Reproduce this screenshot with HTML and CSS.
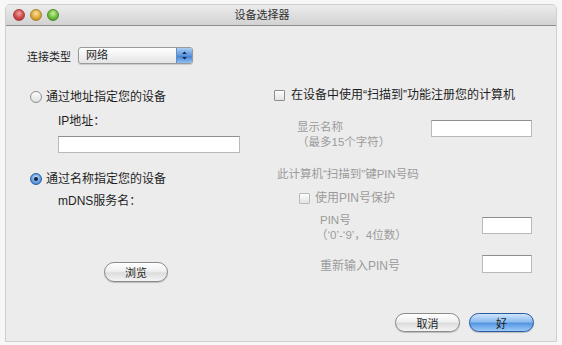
FILE: index.html
```html
<!DOCTYPE html>
<html lang="zh">
<head>
<meta charset="utf-8">
<link rel="stylesheet" href="styles.css">
</head>
<body>
<div class="window">
  <div class="titlebar">
    <div class="lights">
      <span class="light red"></span>
      <span class="light yellow"></span>
      <span class="light green"></span>
    </div>
    <div class="title">设备选择器</div>
  </div>
  <div class="content">
    <div class="conn-row">
      <span class="conn-label">连接类型</span>
      <div class="select">
        <span class="select-text">网络</span>
        <span class="stepper">
          <svg width="7" height="11" viewBox="0 0 7 11"><path d="M1 4 L3.5 1.5 L6 4 Z M1 7 L3.5 9.5 L6 7 Z" fill="#1a2a4a"/></svg>
        </span>
      </div>
    </div>
    <div class="columns">
      <div class="col-left">
        <div class="radio-row first">
          <span class="radio"></span>
          <span>通过地址指定您的设备</span>
        </div>
        <div class="sub-label ip-label">IP地址：</div>
        <div class="textbox ip-box"></div>
        <div class="radio-row second">
          <span class="radio checked"></span>
          <span>通过名称指定您的设备</span>
        </div>
        <div class="sub-label mdns-label">mDNS服务名：</div>
        <div class="btn browse">浏览</div>
      </div>
      <div class="col-right">
        <div class="check-row first">
          <span class="checkbox"></span>
          <span>在设备中使用“扫描到”功能注册您的计算机</span>
        </div>
        <div class="field-row display-row">
          <div class="dim two-line">显示名称<br><span class="indent">（最多15个字符）</span></div>
          <div class="textbox name-box"></div>
        </div>
        <div class="dim pin-heading">此计算机“扫描到”键PIN号码</div>
        <div class="check-row pin-check dim">
          <span class="checkbox disabled"></span>
          <span>使用PIN号保护</span>
        </div>
        <div class="field-row pin-row">
          <div class="dim two-line">PIN号<br><span class="indent2">（‘0’-‘9’，4位数）</span></div>
          <div class="textbox pin-box"></div>
        </div>
        <div class="field-row repin-row">
          <div class="dim">重新输入PIN号</div>
          <div class="textbox pin-box"></div>
        </div>
      </div>
    </div>
    <div class="footer">
      <div class="btn cancel">取消</div>
      <div class="btn ok">好</div>
    </div>
  </div>
</div>
</body>
</html>
```
FILE: styles.css
```css
* { box-sizing: border-box; }
html, body { margin: 0; padding: 0; }
body {
  background: #f7f7f7;
  font-family: "Liberation Sans", "Noto Sans CJK SC", sans-serif;
  font-size: 12px;
  color: #1e1e1e;
  width: 562px;
  height: 345px;
  overflow: hidden;
}
.window {
  margin: 4px 5px 0 5px;
  height: 338px;
  background: #ececec;
  border: 1px solid #cfcfcf;
  border-radius: 5px 5px 0 0;
  overflow: hidden;
}
.titlebar {
  height: 21px;
  display: flex;
  align-items: center;
  background: linear-gradient(#ececec, #d2d2d2);
  border-bottom: 1px solid #8f8f8f;
}
.lights {
  display: flex;
  gap: 5px;
  padding-left: 7px;
}
.light {
  width: 12px;
  height: 12px;
  border-radius: 50%;
  display: block;
}
.red { background: radial-gradient(circle at 50% 35%, #f3a3a3 0%, #d04848 55%, #9c2a2a 100%); border: 1px solid #a04040; }
.yellow { background: radial-gradient(circle at 50% 35%, #fbe1a0 0%, #e0a83a 55%, #a57a20 100%); border: 1px solid #a88030; }
.green { background: radial-gradient(circle at 50% 35%, #c8f0a0 0%, #6cbd3a 55%, #3f8a22 100%); border: 1px solid #4a8a30; }
.title {
  flex: 1;
  text-align: center;
  font-size: 11px;
  color: #333;
  margin-right: 91px;
  line-height: 21px;
}
.content {
  padding: 0 0 0 21px;
}
.conn-row {
  display: flex;
  align-items: center;
  margin-top: 21px;
  height: 17px;
}
.conn-label {
  font-size: 11px;
  width: 51px;
}
.select {
  width: 115px;
  height: 17px;
  display: flex;
  align-items: stretch;
  border: 1px solid #9a9a9a;
  border-radius: 3px;
  background: linear-gradient(#ffffff, #e4e4e4);
  box-shadow: 0 1px 1px rgba(0,0,0,0.15);
  overflow: hidden;
}
.select-text {
  flex: 1;
  font-size: 11px;
  line-height: 15px;
  padding-left: 7px;
}
.stepper {
  width: 16px;
  display: flex;
  align-items: center;
  justify-content: center;
  background: linear-gradient(#a8cdf5, #5b95dc 50%, #3f7fd0 51%, #8ec0f2);
  border-left: 1px solid #6a8cbc;
}
.columns {
  display: grid;
  grid-template-columns: 243px 259px;
  padding-left: 3px;
}
.col-left, .col-right {
  display: flex;
  flex-direction: column;
  align-items: flex-start;
}
.radio-row, .check-row {
  display: flex;
  align-items: center;
  height: 14px;
  line-height: 14px;
  gap: 4px;
}
.radio-row.first { margin-top: 26px; }
.radio-row.second { margin-top: 19px; }
.radio {
  width: 12px;
  height: 12px;
  border-radius: 50%;
  border: 1px solid #8d8d8d;
  background: linear-gradient(#fdfdfd, #e0e0e0);
  display: flex;
  align-items: center;
  justify-content: center;
}
.radio.checked {
  border-color: #2d5d9e;
  background: radial-gradient(circle at 50% 40%, #d6e8fb 0%, #6fa5e5 50%, #2f6ec4 100%);
}
.radio.checked::after {
  content: "";
  width: 4px;
  height: 4px;
  border-radius: 50%;
  background: #10223c;
}
.sub-label {
  padding-left: 28px;
  height: 14px;
  line-height: 14px;
}
.ip-label { margin-top: 10px; }
.mdns-label { margin-top: 8px; }
.textbox {
  background: #ffffff;
  border: 1px solid #b9b9b9;
  border-top-color: #8e8e8e;
  height: 17px;
}
.ip-box {
  margin-top: 8px;
  margin-left: 28px;
  width: 182px;
}
.btn {
  height: 20px;
  border-radius: 10px;
  border: 1px solid #8a8a8a;
  background: linear-gradient(#ffffff 0%, #f0f0f0 45%, #dcdcdc 55%, #f4f4f4 100%);
  font-size: 11px;
  display: flex;
  align-items: center;
  justify-content: center;
  box-shadow: 0 1px 1px rgba(0,0,0,0.2);
}
.browse {
  margin-top: 54px;
  margin-left: 74px;
  width: 64px;
}
.check-row.first { margin-top: 24px; }
.checkbox {
  width: 11px;
  height: 11px;
  border: 1px solid #8d8d8d;
  background: linear-gradient(#fdfdfd, #e3e3e3);
  border-radius: 1px;
}
.checkbox.disabled { border-color: #b8b8b8; }
.check-row.first .checkbox { margin-left: 1px; margin-right: 2px; }
.dim { color: #9b9b9b; }
.field-row {
  display: flex;
  justify-content: space-between;
  width: 259px;
}
.display-row {
  margin-top: 18px;
  padding-left: 24px;
}
.two-line {
  line-height: 15px;
  font-size: 11.5px;
}
.indent { padding-left: 0; }
.indent2 { padding-left: 0; margin-left: -4px; }
.name-box { width: 101px; }
.pin-heading {
  margin-top: 17px;
  padding-left: 4px;
  height: 14px;
  line-height: 14px;
  font-size: 11.5px;
}
.pin-check {
  margin-top: 10px;
  padding-left: 26px;
  gap: 5px;
}
.pin-row {
  margin-top: 8px;
  padding-left: 47px;
}
.pin-box {
  width: 50px;
  margin-top: 4px;
}
.repin-row {
  margin-top: 12px;
  padding-left: 47px;
  align-items: center;
}
.repin-row .pin-box { margin-top: 0; height: 18px; }
.footer {
  display: flex;
  justify-content: flex-end;
  gap: 9px;
  margin-top: 31px;
  padding-right: 22px;
}
.cancel { width: 65px; height: 19px; }
.ok {
  width: 65px;
  height: 19px;
  border-color: #2a5b9e;
  background: linear-gradient(#cfe4fb 0%, #8dbcf0 45%, #5596e4 55%, #9ccaf6 100%);
}
```
